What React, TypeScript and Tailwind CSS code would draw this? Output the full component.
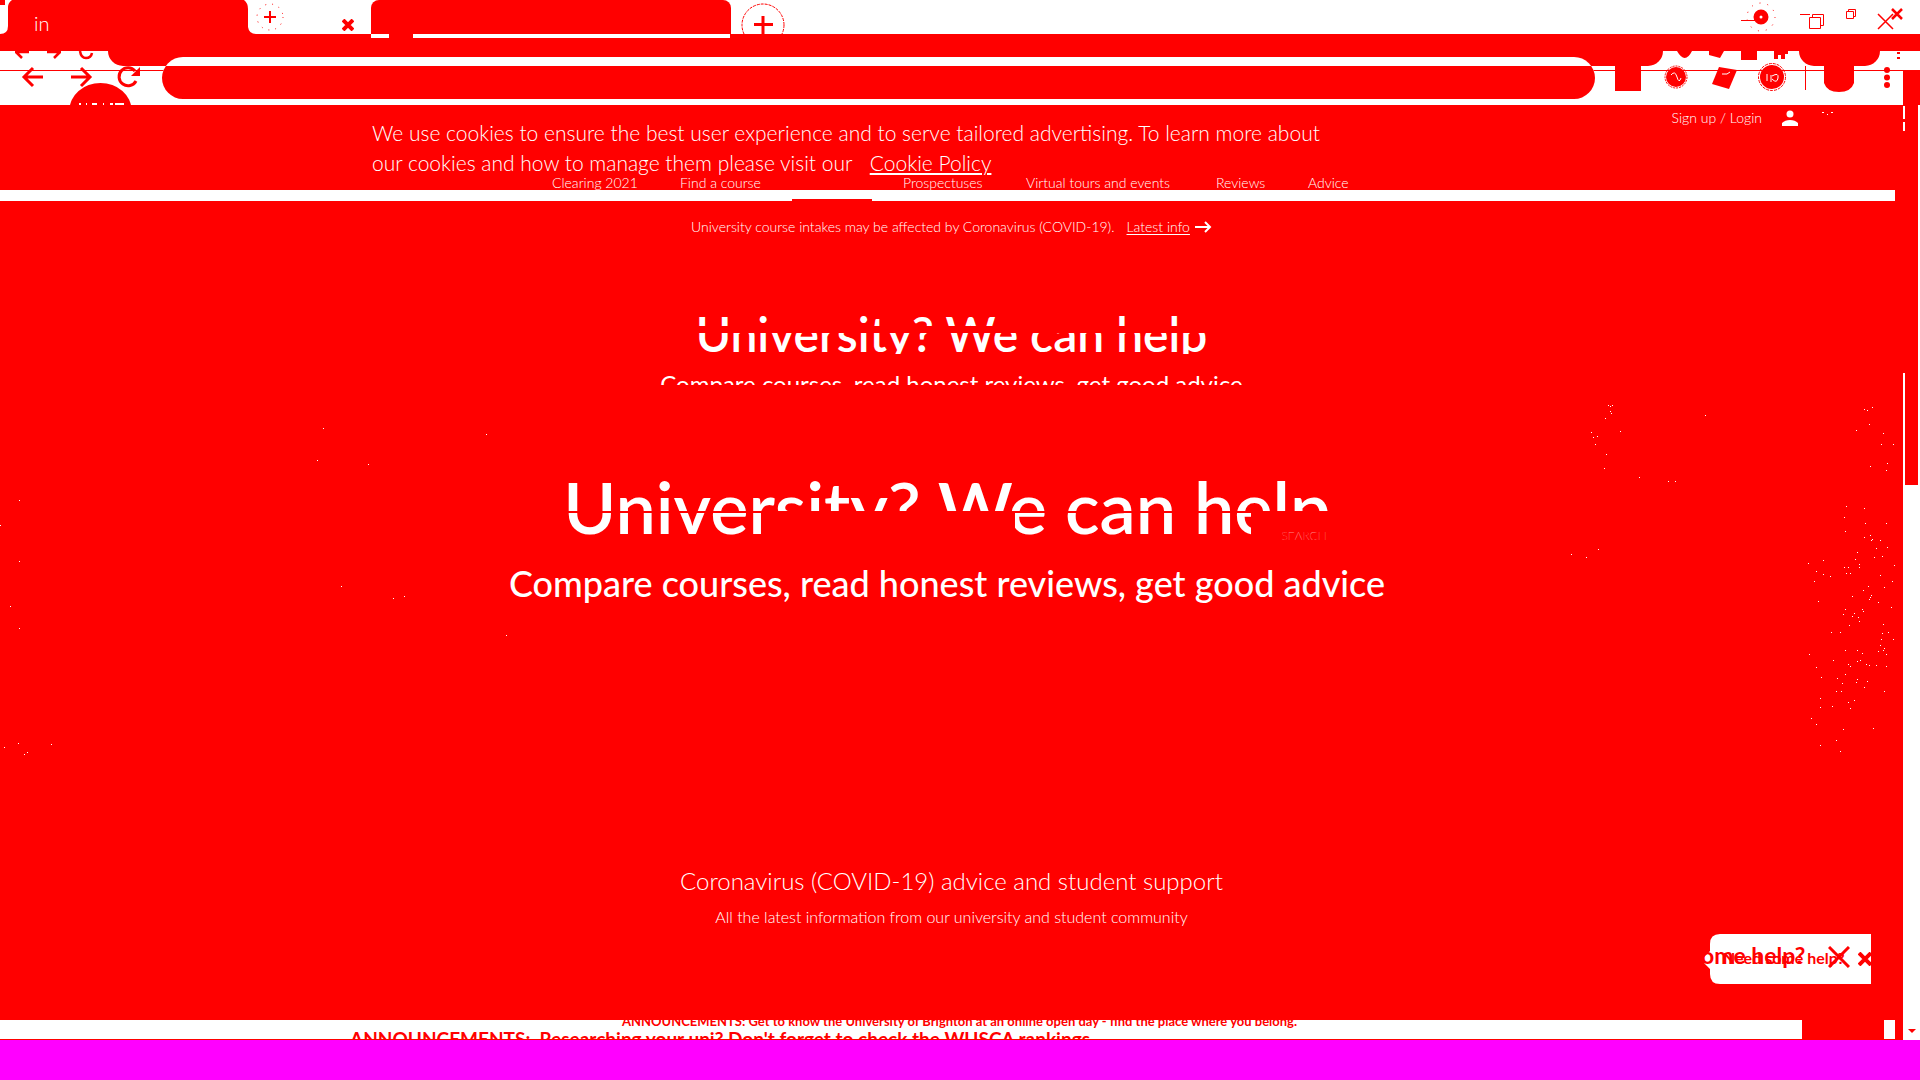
import React from "react";

const specks =
  "190,94 193,127 244,100 247,106 301,109 265,137 271,139 277,136 271,154 274,160 256,175 214,217 220,232 232,229 301,214 226,253 259,283 253,325 358,352 445,364 466,364 451,130 556,166 1057,88 1099,94 1033,130 1033,148 1042,151 1057,142 1048,193 1009,211 1090,220 1084,253 1120,253 1102,310 1099,331 1051,319 154,583 199,592 235,568 979,439 1033,445 973,472 1036,490 1099,490 976,514 1033,532 1051,526 1057,538 1054,541 1081,541 1069,565 1102,562 1012,577 1087,589 1063,592 1006,598 1018,613 1018,622 1123,616 865,610 910,601 973,622 985,622 889,634 910,643 931,649 979,640 991,640 1081,646 883,664 1117,664 1045,679 1030,691 1093,682 997,709 1054,706 1051,712 1048,718 1075,727 895,724 1114,742 976,748 1027,748 1030,754 970,763 1003,760 997,769 1015,772 1018,784 988,796 1090,793 934,817 961,817 1087,820 1105,817 1084,838 1120,838 1081,856 1093,865 1090,871 1075,874 976,871 1012,871 1027,880 868,883 1099,883 940,901 1012,904 1021,901 985,913 991,919 1039,913 1048,916 1069,916 1099,919 889,922 976,943 904,952 952,955 1012,958 1009,967 967,970 1042,964 1033,982 949,994 964,994 1093,994 901,1015 1003,1021 985,1027 901,1042 937,1039 991,1045 874,1075 889,1093 970,1108 1060,1105 949,1141 901,1156 961,1174"
    .split(" ")
    .map((p) => p.split(",").map((n) => Math.floor(Number(n) / 3)));

const leftSpecks = [
  [323, 428], [317, 460], [368, 464], [486, 434], [19, 500], [0, 525], [19, 561], [10, 606],
  [341, 586], [393, 598], [404, 596], [506, 635], [19, 628], [4, 747], [18, 743], [24, 754], [27, 752], [51, 744],
];

function Cross({ size, width }: { size: number; width: number }) {
  return (
    <svg width={size} height={size} viewBox={`0 0 ${size} ${size}`} stroke="red" strokeWidth={width} aria-hidden="true">
      <path d={`M1 1L${size - 1} ${size - 1}M${size - 1} 1L1 ${size - 1}`} />
    </svg>
  );
}

function TabStrip() {
  return (
    <header className="flex h-[34px] items-start overflow-hidden bg-white">
      <div className="relative h-[34px] w-[256px] shrink-0">
        <svg width="256" height="34" fill="red" aria-hidden="true">
          <path d="M0 0h5v5H0zM12 0H244Q248 3 248 9V27Q249 34 256 34H0Q8 34 8 26V7Q8 3 12 0z" />
        </svg>
        <span className="absolute top-[13px] left-[34px] text-xl leading-5 font-light text-white">in</span>
      </div>
      <button aria-label="New tab" className="mt-[2px] h-[30px] w-[28px] shrink-0">
        <svg width="28" height="30" stroke="red" fill="none" aria-hidden="true">
          <path d="M14 9V21M8 15H20" strokeWidth="2" />
          <circle cx="14" cy="15" r="13" strokeDasharray="1 6" />
        </svg>
      </button>
      <button aria-label="Close tab" className="mt-[19px] ml-[58px] shrink-0">
        <Cross size={12} width={4} />
      </button>
      <div className="ml-[17px] h-[34px] w-[360px] shrink-0 rounded-t-lg bg-[#ff0000]" />
      <button aria-label="Open new tab" className="ml-[10px] shrink-0">
        <svg width="44" height="34" stroke="red" fill="none" aria-hidden="true">
          <circle cx="22" cy="25" r="21" strokeDasharray="3 1" />
          <path d="M22 16V34M13 24.500H32" strokeWidth="3" />
        </svg>
      </button>
      <svg className="ml-auto shrink-0" width="180" height="34" fill="none" stroke="red" aria-hidden="true">
        <path d="M1 20.500H15M60 14.500H70" />
        <circle cx="21" cy="17" r="4.500" strokeWidth="6" />
        <circle cx="21" cy="17" r="14" strokeDasharray="1 7" />
        <path d="M69.500 17.500H80.500V28.500H69.500zM72.500 17.500V14.500H83.500V25.500H80.500M106.500 11.500H113.500V18.500H106.500zM108.500 11.500V9.500H115.500V16.500H113.500" />
        <path d="M138 14L153 29M153 14L138 29" strokeWidth="1.500" />
        <path d="M152 9L162 19M162 9L152 19" strokeWidth="2.500" />
      </svg>
    </header>
  );
}

function Toolbar() {
  return (
    <div className="bg-[#ff0000]">
      <div className="flex h-[17px] items-start">
        <div className="ml-[371px] h-1 w-[18px] bg-white" />
        <div className="ml-6 h-1 w-[317px] bg-white" />
      </div>
      <div className="relative h-[54px] overflow-hidden bg-white">
        <div className="absolute inset-x-0 top-[19px] h-px bg-[#ff0000]" />
        <div className="absolute top-0 right-[257px] left-[108px] h-[15px] rounded-b-2xl bg-[#ff0000]" />
        <div className="absolute top-0 right-[40px] h-[15px] w-[81px] rounded-b-2xl bg-[#ff0000]" />
        <div className="absolute top-[19px] right-0 h-[35px] w-[17px] bg-[#ff0000]" />
        <svg className="absolute top-0 left-0" width="162" height="54" fill="none" stroke="red" strokeWidth="3" aria-hidden="true">
          <path d="M15 1H29M16 1L22 7M47 1H61M60 1L54 7M80 0Q81 7 86 7T92 2" strokeWidth="2.500" />
          <path d="M43 26H25M33 17L24 26L33 35M71 26H89M81 17L90 26L81 35" />
          <path d="M136 30A9 9 0 1 1 135 20" />
          <path d="M140 16V25H131z" fill="red" stroke="none" />
          <ellipse cx="100.500" cy="59" rx="31" ry="27" fill="red" stroke="none" />
          <path d="M79 53H81M86 53H87M92 53H97M103 53H104M110 53H113M115 53H124" stroke="white" strokeWidth="2" />
        </svg>
        <svg className="absolute top-0 right-0" width="310" height="54" fill="red" aria-hidden="true">
          <path d="M5 15H31V40H5zM67 0H82Q75 14 67 0zM99 0H114L110 7L99 4zM131 0H147V9H131zM164 0H178V3H175V8H171V4H168V8H164zM287 1H290V3H287zM287 6H290V8H287z" />
          <circle cx="66" cy="26" r="10" />
          <circle cx="66" cy="26" r="11" fill="none" stroke="red" strokeDasharray="2 1" />
          <path d="M109 16L127 19L119 38L102 33z" />
          <circle cx="162" cy="26" r="12" />
          <circle cx="162" cy="26" r="13.500" fill="none" stroke="red" strokeDasharray="3 1" />
          <path d="M195 15H196V39H195zM214 15H244V32Q241 41 229 41T214 32z" />
          <circle cx="277" cy="19" r="3" />
          <circle cx="277" cy="26.500" r="3" />
          <circle cx="277" cy="34" r="3" />
          <path d="M61 24Q65 19 67 26T71 27M112 23H117L120 21M157 23V30M161 24V31M162 25Q169 21 168 27T162 28" fill="none" stroke="white" />
        </svg>
        <div className="relative mt-[6px] mr-[325px] ml-[162px] h-[42px] overflow-hidden rounded-full bg-white">
          <input aria-label="Address" className="mt-[9px] block h-[33px] w-full bg-[#ff0000] px-6 text-white outline-none" />
        </div>
      </div>
    </div>
  );
}

function SiteHeader() {
  const links = [
    ["Clearing 2021", "w-[128px]"],
    ["Find a course", "w-[223px]"],
    ["Prospectuses", "w-[123px]"],
    ["Virtual tours and events", "w-[190px]"],
    ["Reviews", "w-[92px]"],
    ["Advice", "w-[60px]"],
  ];
  return (
    <section className="relative h-[85px] overflow-hidden text-white">
      <p className="ml-[372px] w-[1000px] pt-[13px] text-[21px] leading-[30px] font-light">
        We use cookies to ensure the best user experience and to serve tailored advertising. To learn more about
        <br />
        our cookies and how to manage them please visit our{" "}
        <a href="#cookies" className="ml-3 underline decoration-2 underline-offset-2">Cookie Policy</a>
      </p>
      <nav className="-mt-1 ml-[552px] flex text-sm leading-[18px] font-light">
        {links.map(([label, width]) => (
          <a key={label} href="#nav" className={width + " shrink-0 whitespace-nowrap"}>{label}</a>
        ))}
      </nav>
      <div className="absolute top-[3px] right-[69px] flex items-center text-sm font-light">
        <a href="#login" className="mr-5 whitespace-nowrap">Sign up / Login</a>
        <svg width="16" height="16" fill="white" aria-hidden="true">
          <circle cx="8" cy="4" r="3.500" />
          <path d="M0 16V13Q3 10 8 10T16 13V16z" />
        </svg>
        <svg className="ml-6" width="12" height="16" stroke="white" fill="none" aria-hidden="true">
          <path d="M0 2.500H2M5 4.500H6M9 2.500H11" />
        </svg>
      </div>
    </section>
  );
}

function Hero() {
  return (
    <section className="relative h-[819px] overflow-hidden text-white">
      <svg className="absolute top-0 left-0 h-full w-full" fill="white" shapeRendering="crispEdges" aria-hidden="true">
        {specks.map(([x, y]) => (
          <rect key={`${x}-${y}`} x={1520 + x} y={159 + y} width="1" height="1" />
        ))}
        {leftSpecks.map(([x, y]) => (
          <rect key={`l${x}-${y}`} x={x} y={y - 201} width="1" height="1" />
        ))}
      </svg>
      <div className="relative flex h-[184px] flex-col items-center">
        <p className="mt-4 flex items-center text-sm leading-5 font-light whitespace-nowrap">
          University course intakes may be affected by Coronavirus (COVID-19).
          <a href="#info" className="mr-1 ml-3 underline underline-offset-2">Latest info</a>
          <svg width="18" height="16" stroke="white" fill="none" strokeWidth="2" aria-hidden="true">
            <path d="M1 8H16M11 3L16 8L11 13" />
          </svg>
        </p>
        <div className="relative mt-[67px] text-5xl leading-[60px] font-semibold whitespace-nowrap">
          University? We can help
          <div className="absolute inset-x-0 top-[22px] h-[7px] bg-[#ff0000]" />
          <div className="absolute inset-x-0 top-[50px] h-4 bg-[#ff0000]" />
        </div>
        <p className="mt-[6px] text-2xl leading-7 whitespace-nowrap">Compare courses, read honest reviews, get good advice</p>
      </div>
      <div className="absolute inset-x-0 top-[184px] h-5 bg-[#ff0000]" />
      <div className="relative flex flex-col items-center pt-[76px] pr-[9px]">
        <h1 className="relative text-7xl leading-[90px] font-semibold whitespace-nowrap">
          University? We can help
          <div className="absolute inset-x-0 top-[50px] h-[2px] bg-[#ff0000]" />
          <div className="absolute top-[50px] left-[206px] h-10 w-[246px] bg-[#ff0000]" />
          <div className="absolute top-[50px] right-0 h-10 w-[80px] bg-[#ff0000]" />
          <span className="absolute top-[67px] right-[4px] text-xs leading-4 font-thin">SEARCH</span>
        </h1>
        <p className="mt-[10px] text-4xl leading-[44px] font-medium whitespace-nowrap">Compare courses, read honest reviews, get good advice</p>
      </div>
      <div className="relative mt-[260px] flex flex-col items-center text-center font-light">
        <h2 className="text-2xl leading-8">Coronavirus (COVID-19) advice and student support</h2>
        <p className="mt-2 text-base leading-6">All the latest information from our university and student community</p>
      </div>
      <aside className="absolute top-[733px] right-[32px] flex h-[50px] w-[167px]">
        <svg width="167" height="50" fill="white" aria-hidden="true">
          <path d="M167 0H16Q6 0 6 10V17L0 23V29L6 35V40Q6 50 16 50H167z" />
        </svg>
        <span className="absolute top-[5px] left-[-3px] text-[23px] leading-8 font-bold whitespace-nowrap text-[#ff0000]">ome help?</span>
        <span className="absolute top-[14px] left-[19px] text-base leading-5 font-bold whitespace-nowrap text-[#ff0000]">Need some help?</span>
        <button aria-label="Dismiss" className="absolute top-[12px] left-[124px]"><Cross size={22} width={3} /></button>
        <button aria-label="Close" className="absolute top-[18px] left-[154px]"><Cross size={14} width={4} /></button>
      </aside>
    </section>
  );
}

function Announcements() {
  return (
    <footer className="flex h-[20px] border-b border-[#ff0000] font-bold text-[#ff0000]">
      <div className="relative flex-1 overflow-hidden bg-white">
        <p className="absolute -top-[9px] left-[622px] text-[13px] leading-5 whitespace-nowrap">
          ANNOUNCEMENTS: Get to know the University of Brighton at an online open day - find the place where you belong.
        </p>
        <p className="absolute top-[7px] left-[350px] text-[19px] leading-6 whitespace-nowrap">
          ANNOUNCEMENTS: &nbsp;Researching your uni? Don't forget to check the WUSCA rankings.
        </p>
      </div>
      <div className="w-[82px] bg-[#ff0000]" />
      <div className="w-[11px] bg-white" />
      <div className="w-2 bg-[#ff0000]" />
    </footer>
  );
}

export default function App() {
  return (
    <div className="min-h-screen bg-[#ff00ff] font-['Lato',sans-serif]">
      <TabStrip />
      <Toolbar />
      <div className="flex bg-[#ff0000]">
        <main className="min-w-0 flex-1">
          <SiteHeader />
          <div className="mr-2 flex h-[11px] items-end bg-white">
            <div className="ml-[792px] h-[2px] w-[80px] bg-[#ff0000]" />
          </div>
          <Hero />
          <Announcements />
        </main>
        <div className="flex w-[17px] shrink-0 flex-col" aria-hidden="true">
          <div className="flex h-[380px] justify-between">
            <div className="w-[2px]">
              <div className="mt-px h-[13px] bg-white" />
              <div className="mt-[3px] h-[9px] bg-white" />
              <div className="mt-[242px] h-[112px] bg-white" />
            </div>
            <div className="w-[2px] bg-white" />
          </div>
          <div className="flex flex-1 items-end justify-center bg-white pb-[7px]">
            <svg width="8" height="4" fill="red"><path d="M0 0H8L4 4z" /></svg>
          </div>
        </div>
      </div>
    </div>
  );
}
